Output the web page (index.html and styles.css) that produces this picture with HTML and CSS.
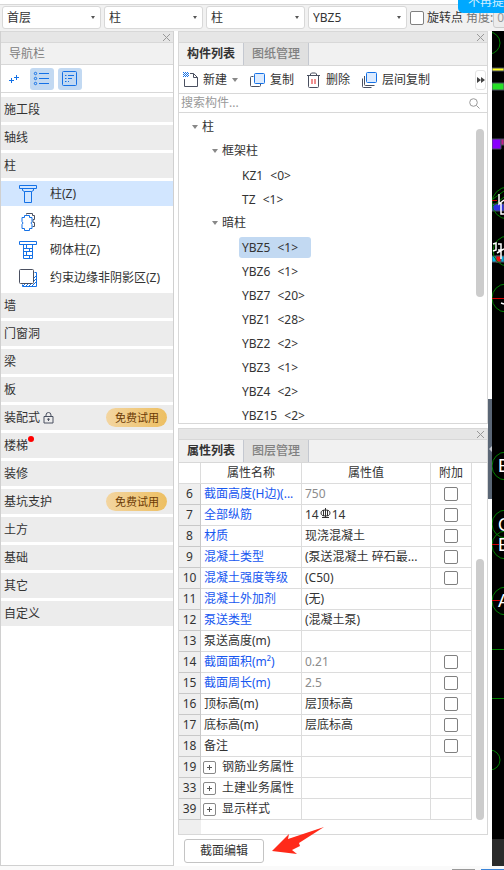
FILE: index.html
```
<!DOCTYPE html>
<html lang="zh-CN">

<head>
    <meta charset="UTF-8">
    <meta name="viewport" content="width=device-width, initial-scale=1.0">
    <title>构件列表</title>
    <link rel="stylesheet" href="styles.css">
</head>

<body>
    <header class="topbar">
        <div class="combo"><select aria-label="楼层"><option>首层</option></select></div>
        <div class="combo"><select aria-label="构件大类"><option>柱</option></select></div>
        <div class="combo"><select aria-label="构件类型"><option>柱</option></select></div>
        <div class="combo"><select aria-label="构件"><option>YBZ5</option></select></div>
        <label class="rotate"><input type="checkbox" class="check">旋转点</label>
        <label class="angle">角度:<input type="text" value="0"></label>
        <div class="tip">不再提</div>
    </header>

    <main class="workspace">
        <nav class="nav-panel">
            <div class="strip"><button class="close" aria-label="关闭"></button></div>
            <h2 class="nav-title">导航栏</h2>
            <div class="nav-tools">
                <button class="nav-tool" aria-label="展开">
                    <svg width="12" height="12" viewBox="0 0 12 12"><path d="M3.500 5v5M1 7.500h5M8.500 2v5M6 4.500h5"/></svg>
                </button>
                <button class="nav-tool on" aria-label="列表">
                    <svg width="18" height="16" viewBox="0 0 18 16"><path d="M6 2.500h10M6 7.500h10M6 12.500h10"/><circle cx="2.500" cy="2.500" r="1.200"/><circle cx="2.500" cy="7.500" r="1.200"/><circle cx="2.500" cy="12.500" r="1.200"/></svg>
                </button>
                <button class="nav-tool on" aria-label="详情">
                    <svg width="16" height="16" viewBox="0 0 16 16"><rect x="0.500" y="0.500" width="14" height="14" rx="1"/><path d="M3 4.500h1.500M6 4.500h6M3 7.500h1.500M6 7.500h4M3 10.500h1.500M6 10.500h1"/></svg>
                </button>
            </div>
            <ul class="nav-list">
                <li><a href="#">施工段</a></li>
                <li><a href="#">轴线</a></li>
                <li><a href="#">柱</a></li>
                <li><a href="#" class="sub active">
                    <svg width="20" height="20" viewBox="0 0 20 20"><path d="M1.500 1.500h17v3h-17zM4.500 4.500v2l2 1h7l2-1v-2M6.500 7.500v11h7v-11"/></svg>柱(Z)</a></li>
                <li><a href="#" class="sub">
                    <svg width="20" height="20" viewBox="0 0 20 20"><path class="dark" d="M8.500 2.500V1.500h6v2h2v4h-1.500v3h1.500v4h-2"/><path d="M6.500 3.500h5v2h2.500v4l-1 1.500 1 1.500v4h-2.500v2h-5v-2H4v-4l1-1.500-1-1.500v-4h2.500z"/></svg>构造柱(Z)</a></li>
                <li><a href="#" class="sub">
                    <svg width="20" height="20" viewBox="0 0 20 20"><path d="M1.500 1.500h17v3h-17zM5.500 4.500v14h9v-14M5.500 8.500h9M5.500 11.500h9M5.500 15.500h9M8.500 4.500v4M11.500 8.500v3M8.500 11.500v4M11.500 15.500v3"/></svg>砌体柱(Z)</a></li>
                <li><a href="#" class="sub">
                    <svg width="20" height="20" viewBox="0 0 20 20"><path d="M16.500 4.500h2v14h-14v-2M5 18l2-2M8 18l2-2M11 18l2-2M14 18l4-4M16 13l2-2M16 10l2-2"/><rect class="dark" x="1.500" y="1.500" width="14" height="14" rx="1"/></svg>约束边缘非阴影区(Z)</a></li>
                <li><a href="#">墙</a></li>
                <li><a href="#">门窗洞</a></li>
                <li><a href="#">梁</a></li>
                <li><a href="#">板</a></li>
                <li><a href="#">装配式
                    <svg class="lock" width="11" height="12" viewBox="0 0 11 12"><path d="M1 4.500h9v6.500H1zM3 4.500V3a2.500 2.500 0 0 1 5 0v1.500M5.500 7v2"/><circle cx="5.500" cy="7.300" r="0.800"/></svg><span class="trial">免费试用</span></a></li>
                <li><a href="#"><span class="dotted">楼梯</span></a></li>
                <li><a href="#">装修</a></li>
                <li><a href="#">基坑支护<span class="trial">免费试用</span></a></li>
                <li><a href="#">土方</a></li>
                <li><a href="#">基础</a></li>
                <li><a href="#">其它</a></li>
                <li><a href="#">自定义</a></li>
            </ul>
        </nav>

        <div class="middle">
            <section class="panel components">
                <div class="strip"><button class="close" aria-label="关闭"></button></div>
                <div class="tabs">
                    <button class="tab current">构件列表</button>
                    <button class="tab">图纸管理</button>
                </div>
                <div class="tools">
                    <button class="tool">
                        <svg width="16" height="16" viewBox="0 0 16 16"><path d="M7 1.500h3.500l4 4v9H1.500V7M10.500 1.500v4h4"/><path class="blue" stroke-dasharray="1 1" d="M0 0.500h5M1 1.500h5M0 2.500h5M1 3.500h5M0 4.500h5"/></svg>新建<i class="caret"></i>
                    </button>
                    <button class="tool">
                        <svg width="16" height="16" viewBox="0 0 16 16"><path d="M3.500 4.500h-2a1 1 0 0 0-1 1v8a1 1 0 0 0 1 1h8a1 1 0 0 0 1-1v-1.500"/><rect class="blue fill" x="4.500" y="1.500" width="10" height="10" rx="1"/></svg>复制
                    </button>
                    <button class="tool">
                        <svg width="16" height="16" viewBox="0 0 16 16"><path d="M1 3.500h13M4.500 3.500v-1.500l1-1h4l1 1v1.500M2.500 3.500v11a1 1 0 0 0 1 1h8a1 1 0 0 0 1-1v-11"/><path class="red" d="M6 7v5M9 7v5"/></svg>删除
                    </button>
                    <button class="tool">
                        <svg width="16" height="16" viewBox="0 0 16 16"><path d="M2.500 4v8.500a1 1 0 0 0 1 1h9M0.500 6.500v8a1 1 0 0 0 1 1h8"/><rect class="blue fill" x="4.500" y="0.500" width="10" height="10" rx="1"/></svg>层间复制
                    </button>
                    <button class="more" aria-label="更多">
                        <svg width="8" height="6" viewBox="0 0 8 6"><path d="M0 0l4 3-4 3zM4 0l4 3-4 3z"/></svg>
                    </button>
                </div>
                <div class="search">
                    <input type="search" placeholder="搜索构件..." aria-label="搜索构件">
                    <svg width="11" height="11" viewBox="0 0 11 11"><circle cx="4.500" cy="4.500" r="3.800"/><path d="M7.500 7.500l3 3"/></svg>
                </div>
                <div class="tree-area">
                    <ul class="tree">
                        <li><span class="node"><i class="caret"></i>柱</span>
                            <ul>
                                <li><span class="node"><i class="caret"></i>框架柱</span>
                                    <ul>
                                        <li><a href="#" class="leaf">KZ1 <span>&lt;0&gt;</span></a></li>
                                        <li><a href="#" class="leaf">TZ <span>&lt;1&gt;</span></a></li>
                                    </ul>
                                </li>
                                <li><span class="node"><i class="caret"></i>暗柱</span>
                                    <ul>
                                        <li><a href="#" class="leaf selected">YBZ5 <span>&lt;1&gt;</span></a></li>
                                        <li><a href="#" class="leaf">YBZ6 <span>&lt;1&gt;</span></a></li>
                                        <li><a href="#" class="leaf">YBZ7 <span>&lt;20&gt;</span></a></li>
                                        <li><a href="#" class="leaf">YBZ1 <span>&lt;28&gt;</span></a></li>
                                        <li><a href="#" class="leaf">YBZ2 <span>&lt;2&gt;</span></a></li>
                                        <li><a href="#" class="leaf">YBZ3 <span>&lt;1&gt;</span></a></li>
                                        <li><a href="#" class="leaf">YBZ4 <span>&lt;2&gt;</span></a></li>
                                        <li><a href="#" class="leaf">YBZ15 <span>&lt;2&gt;</span></a></li>
                                    </ul>
                                </li>
                            </ul>
                        </li>
                    </ul>
                    <div class="scroll"><div class="thumb"></div></div>
                </div>
            </section>

            <section class="panel properties">
                <div class="strip"><button class="close" aria-label="关闭"></button></div>
                <div class="tabs">
                    <button class="tab current">属性列表</button>
                    <button class="tab">图层管理</button>
                </div>
                <div class="table-area">
                    <table>
                        <thead>
                            <tr><th class="num"></th><th class="name">属性名称</th><th>属性值</th><th class="extra">附加</th></tr>
                        </thead>
                        <tbody>
                            <tr><td>6</td><td class="link">截面高度(H边)(...</td><td class="muted">750</td><td><input type="checkbox" class="check" aria-label="附加 截面高度"></td></tr>
                            <tr><td>7</td><td class="link">全部纵筋</td><td>14<svg class="rebar" width="11" height="11" viewBox="0 0 11 11"><ellipse cx="5.500" cy="5" rx="4.500" ry="3"/><path d="M5.500 0v10M3.500 2v6M7.500 2v6M2 9.500h7"/></svg>14</td><td><input type="checkbox" class="check" aria-label="附加 全部纵筋"></td></tr>
                            <tr><td>8</td><td class="link">材质</td><td>现浇混凝土</td><td><input type="checkbox" class="check" aria-label="附加 材质"></td></tr>
                            <tr><td>9</td><td class="link">混凝土类型</td><td>(泵送混凝土 碎石最...</td><td><input type="checkbox" class="check" aria-label="附加 混凝土类型"></td></tr>
                            <tr><td>10</td><td class="link">混凝土强度等级</td><td>(C50)</td><td><input type="checkbox" class="check" aria-label="附加 混凝土强度等级"></td></tr>
                            <tr><td>11</td><td class="link">混凝土外加剂</td><td>(无)</td><td></td></tr>
                            <tr><td>12</td><td class="link">泵送类型</td><td>(混凝土泵)</td><td></td></tr>
                            <tr><td>13</td><td>泵送高度(m)</td><td></td><td></td></tr>
                            <tr><td>14</td><td class="link">截面面积(m²)</td><td class="muted">0.21</td><td><input type="checkbox" class="check" aria-label="附加 截面面积"></td></tr>
                            <tr><td>15</td><td class="link">截面周长(m)</td><td class="muted">2.5</td><td><input type="checkbox" class="check" aria-label="附加 截面周长"></td></tr>
                            <tr><td>16</td><td>顶标高(m)</td><td>层顶标高</td><td><input type="checkbox" class="check" aria-label="附加 顶标高"></td></tr>
                            <tr><td>17</td><td>底标高(m)</td><td>层底标高</td><td><input type="checkbox" class="check" aria-label="附加 底标高"></td></tr>
                            <tr><td>18</td><td>备注</td><td></td><td><input type="checkbox" class="check" aria-label="附加 备注"></td></tr>
                            <tr><td>19</td><td><button class="expand" aria-label="展开"></button>钢筋业务属性</td><td></td><td></td></tr>
                            <tr><td>33</td><td><button class="expand" aria-label="展开"></button>土建业务属性</td><td></td><td></td></tr>
                            <tr><td>39</td><td><button class="expand" aria-label="展开"></button>显示样式</td><td></td><td></td></tr>
                        </tbody>
                    </table>
                    <div class="scroll"><div class="thumb"></div></div>
                </div>
            </section>
            <div class="actions">
                <button class="edit">截面编辑</button>
                <svg class="arrow" width="54" height="28" viewBox="0 0 54 28"><path d="M52 1L16 13l1-5L0 25l25 3-5-4 8-4-1-3z"/></svg>
            </div>
        </div>

        <aside class="drawing">
            <svg width="12" height="808" viewBox="0 0 12 808">
                <path fill="#ffff20" d="M0 37h12v3H0z"/>
                <path fill="#28e028" d="M0 52h12v7H0z"/>
                <path fill="#8a00ff" d="M0 108h9v10H0z"/>
                <path fill="#c81e8c" d="M9 108h3v6H9z"/>
                <path fill="#3030e0" d="M0 173h12v7H0z"/>
                <path fill="#00b4e6" d="M0 225h12v6H0z"/>
                <path fill="#f01010" d="M4 225h5v6H4z"/>
                <g fill="none" stroke="#008000">
                    <circle cx="-3" cy="12" r="11"/>
                    <circle cx="16" cy="172" r="16"/>
                    <path d="M1 168l11-8M1 175l11-9"/>
                    <circle cx="16" cy="220" r="15"/>
                    <circle cx="14" cy="267" r="14"/>
                    <circle cx="14" cy="435" r="14"/>
                    <circle cx="14" cy="493" r="14"/>
                    <circle cx="14" cy="514" r="14"/>
                    <circle cx="14" cy="570" r="14"/>
                    <circle cx="-2" cy="729" r="10"/>
                    <path d="M0 618.500h12M0 667.500h12"/>
                </g>
                <path stroke="#d00000" d="M0 169.500h5M0 267.500h12M0 513.500h7M0 569.500h8"/>
                <path fill="none" stroke="#fff" stroke-width="1.500" d="M7 163v10l5-4M9 172v11h3M1 213l3-1v7l-3 1M6 213h3v6H6M5 222l7-4M9 214v14M9 272l3 1"/>
                <g class="axis">
                    <text x="6" y="441">B</text>
                    <text x="6" y="500">C</text>
                    <text x="6" y="520">B</text>
                    <text x="6" y="576">A</text>
                </g>
            </svg>
            <button class="splitter" aria-label="收起"></button>
        </aside>
    </main>

    <footer class="bottom"><span></span><span class="primary"></span></footer>
</body>

</html>
```
FILE: styles.css
```
* {
    box-sizing: border-box;
}

body {
    margin: 0;
    height: 100vh;
    display: flex;
    flex-direction: column;
    overflow: hidden;
    background: #fff;
    color: #333;
    font: 12px/20px "Noto Sans", "Noto Sans CJK SC", sans-serif;
}

button, input, select {
    font: inherit;
    color: inherit;
    margin: 0;
    padding: 0;
}

button {
    border: none;
    background: none;
    cursor: pointer;
}

a {
    color: inherit;
    text-decoration: none;
}

ul {
    list-style: none;
    margin: 0;
    padding: 0;
}

svg {
    flex: none;
    fill: none;
    stroke: #4a5060;
}

.check {
    appearance: none;
    width: 14px;
    height: 14px;
    border: 1px solid #808080;
    border-radius: 2px;
    background: #fff;
}

.caret {
    border: 3px solid transparent;
    border-top: 4px solid #888;
    border-bottom: none;
}

/* top bar */
.topbar {
    position: relative;
    display: flex;
    align-items: center;
    gap: 3px;
    margin-top: 4px;
    padding: 1px 0 2px 2px;
    border-top: 1px solid #d8d8d8;
    background: #f1f1f1;
    white-space: nowrap;
}

.combo {
    position: relative;
    flex: none;
    width: 99px;
}

.combo select {
    display: block;
    appearance: none;
    width: 100%;
    height: 23px;
    padding: 0 4px;
    border: 1px solid #d8d8d8;
    border-radius: 3px;
    background: #fff;
}

.combo::after {
    content: "";
    position: absolute;
    top: 10px;
    right: 6px;
    border: 2px solid transparent;
    border-top: 3px solid #555;
    border-bottom: none;
}

.rotate, .angle {
    flex: none;
    display: flex;
    align-items: center;
}

.rotate {
    gap: 3px;
}

.angle {
    color: #777;
}

.angle input {
    width: 50px;
    height: 20px;
    padding: 0 3px;
    border: 1px solid #ccc;
    border-radius: 3px;
    background: #ececec;
    color: #999;
}

.tip {
    position: absolute;
    top: -5px;
    right: 0;
    width: 46px;
    height: 13px;
    padding-left: 10px;
    border-radius: 0 0 0 5px;
    background: #00a8ff;
    color: #d4f0ff;
    line-height: 4px;
    overflow: hidden;
}

.workspace {
    flex: 1;
    min-height: 0;
    display: grid;
    grid-template-columns: 174px minmax(0, 1fr) 12px;
    column-gap: 4px;
}

.strip {
    display: flex;
    justify-content: flex-end;
    padding-right: 2px;
    height: 12px;
    border-top: 1px solid #d8d8d8;
    border-bottom: 1px solid #d8d8d8;
    background: #e6e6e6;
}

.close {
    width: 9px;
    height: 10px;
    background:
        linear-gradient(45deg, transparent 44%, #999 44%, #999 56%, transparent 56%),
        linear-gradient(-45deg, transparent 44%, #999 44%, #999 56%, transparent 56%);
    background-size: 7px 7px;
    background-position: center;
    background-repeat: no-repeat;
}

/* navigation */
.nav-panel {
    border: 1px solid #d0d0d0;
    border-top: none;
}

.nav-title {
    margin: 0;
    padding-left: 8px;
    border-bottom: 1px solid #d8d8d8;
    background: #f1f1f1;
    color: #808080;
    font-size: 12px;
    font-weight: 400;
    line-height: 21px;
}

.nav-tools {
    display: flex;
    align-items: center;
    gap: 4px;
    height: 28px;
    padding-left: 1px;
    border-bottom: 1px solid #d8d8d8;
}

.nav-tool {
    display: flex;
    align-items: center;
    justify-content: center;
    width: 24px;
    height: 22px;
    border-radius: 3px;
}

.nav-tool.on {
    background: #c2d9f2;
}

.nav-tool svg {
    stroke: #1471e6;
}

.nav-list {
    display: flex;
    flex-direction: column;
    gap: 3px;
    padding-top: 4px;
}

.nav-list a {
    display: flex;
    align-items: center;
    height: 25px;
    padding: 0 6px 0 3px;
    background: #ececec;
    white-space: nowrap;
}

.nav-list .sub {
    gap: 12px;
    padding: 0 0 0 17px;
    background: #fff;
}

.nav-list .active {
    background: #d2e6ff;
}

.sub svg {
    stroke: #1471e6;
}

.sub .dark {
    stroke: #4a5060;
}

.sub rect {
    fill: #fff;
}

.lock {
    margin-left: 3px;
}

.trial {
    margin-left: auto;
    padding: 0 8px 0 9px;
    border-radius: 10px;
    background: linear-gradient(90deg, #f3d5a0, #edbf62);
    color: #6b3a05;
    font-size: 11px;
    line-height: 19px;
}

.dotted {
    position: relative;
}

.dotted::after {
    content: "";
    position: absolute;
    top: 0;
    right: -6px;
    width: 6px;
    height: 6px;
    border-radius: 50%;
    background: #f00;
}

/* component and property panels */
.middle {
    display: flex;
    flex-direction: column;
    min-height: 0;
}

.panel {
    border: 1px solid #d8d8d8;
    border-top: none;
}

.components {
    flex: 1;
    min-height: 0;
    display: flex;
    flex-direction: column;
    margin-bottom: 4px;
}

.components > * {
    flex: none;
}

.tabs {
    display: flex;
    height: 23px;
    border-bottom: 1px solid #d8d8d8;
    background: #f1f1f1;
}

.tab {
    padding: 0 8px;
    border-right: 1px solid #c4c8d0;
    background: #e0e0e0;
    color: #808080;
    font-weight: 500;
}

.tab.current {
    background: #f1f1f1;
    color: #333;
    font-weight: 700;
}

.tools {
    display: flex;
    align-items: center;
    gap: 12px;
    height: 28px;
    padding: 0 1px 0 4px;
    border-bottom: 1px solid #d8d8d8;
    white-space: nowrap;
}

.tool {
    display: flex;
    align-items: center;
    gap: 4px;
}

.tool .caret {
    margin-left: 1px;
}

.tools .blue {
    stroke: #1471e6;
}

.tools .fill {
    fill: #dcebff;
}

.tools .red {
    stroke: #e02020;
}

.more {
    display: flex;
    align-items: center;
    justify-content: center;
    width: 11px;
    height: 20px;
    margin-left: auto;
    border: 1px solid #e4e4e4;
    border-radius: 3px;
}

.more svg {
    fill: #444;
    stroke: none;
}

.search {
    display: flex;
    align-items: center;
    height: 19px;
    padding: 0 7px 0 2px;
    border-bottom: 1px solid #d8d8d8;
}

.search input {
    flex: 1;
    min-width: 0;
    height: 18px;
    border: none;
    outline: none;
    background: none;
}

.search input::placeholder {
    color: #999;
    opacity: 1;
}

.search svg {
    stroke: #999;
}

.components .tree-area {
    flex: 1;
    min-height: 0;
    display: flex;
    overflow: hidden;
}

.tree {
    flex: 1;
    padding: 2px 0 0 13px;
    line-height: 24px;
}

.tree ul {
    padding-left: 20px;
}

.node {
    display: flex;
    align-items: center;
    gap: 4px;
}

.tree li li li {
    display: flex;
    align-items: center;
    height: 24px;
    padding-left: 7px;
}

.leaf {
    padding: 0 13px 0 3px;
    border-radius: 3px;
    line-height: 21px;
}

.leaf span {
    margin-left: 4px;
}

.leaf.selected {
    background: #c2d9f2;
}

.scroll {
    flex: none;
    width: 15px;
    padding: 0 3px 0 4px;
}

.thumb {
    border-radius: 4px;
    background: #ccc;
}

.tree-area .scroll {
    padding-top: 16px;
}

.tree-area .thumb {
    height: 55%;
    min-height: 168px;
}

.properties {
    flex: none;
}

.table-area {
    display: flex;
    padding-bottom: 14px;
    background: linear-gradient(90deg, #efefef 22px, #fff 22px);
}

.table-area .scroll {
    display: flex;
    align-items: flex-end;
}

.table-area .thumb {
    flex: 1;
    height: 73%;
}

table {
    flex: 1;
    width: 100%;
    table-layout: fixed;
    border-collapse: separate;
    border-spacing: 0;
    background: #fff;
}

th, td {
    height: 21px;
    padding: 0 0 0 3px;
    border-right: 1px solid #dcdcdc;
    border-bottom: 1px solid #dcdcdc;
    font-weight: 400;
    line-height: 20px;
    text-align: left;
    white-space: nowrap;
    overflow: hidden;
}

th {
    padding: 0;
    text-align: center;
}

.num {
    width: 22px;
}

.name {
    width: 101px;
}

.extra {
    width: 41px;
}

td:first-child {
    padding: 0;
    border-color: #c8c8c8;
    background: #efefef;
    text-align: center;
}

td:last-child {
    padding: 0;
    text-align: center;
}

td .check {
    display: block;
    margin: 0 auto;
}

.link {
    color: #1757f0;
}

.muted {
    color: #8c8c8c;
}

.rebar {
    margin: 0 1px;
    stroke: #333;
}

.expand {
    width: 13px;
    height: 13px;
    margin: 0 6px 0 -1px;
    border: 1px solid #888;
    border-radius: 2px;
    background:
        linear-gradient(#555, #555) center / 5px 1px no-repeat,
        linear-gradient(#555, #555) center / 1px 5px no-repeat;
    vertical-align: -2px;
}

.actions {
    flex: none;
    display: flex;
    align-items: flex-start;
    gap: 8px;
    height: 31px;
    padding: 4px 0 0 6px;
}

.edit {
    height: 24px;
    padding: 0 15px;
    border: 1px solid #c4c4c4;
    border-radius: 3px;
    background: #fff;
}

/* the arrow reaches up over the table's bottom edge */
.arrow {
    position: relative;
    top: -13px;
    fill: #ff2a1a;
    stroke: none;
}

/* drawing area */
.drawing {
    position: relative;
    background: #2a2a2a;
}

.drawing > svg {
    display: block;
    background: #000;
}

.axis {
    fill: #fff;
    stroke: none;
    font: 18px "Liberation Sans", sans-serif;
}

.splitter {
    position: absolute;
    top: 368px;
    left: -4px;
    width: 4px;
    height: 100px;
    background: #5a6675;
}

.splitter::after {
    content: "";
    display: block;
    margin-left: 1px;
    border: 3px solid transparent;
    border-left: none;
    border-right-color: #c4c8d0;
}

.bottom {
    flex: none;
    display: flex;
    justify-content: flex-end;
    gap: 6px;
    height: 4px;
    padding-top: 3px;
    background: #fafafa;
}

.bottom span {
    width: 23px;
    background: #999;
}

.bottom .primary {
    background: #3a84d8;
}
```
